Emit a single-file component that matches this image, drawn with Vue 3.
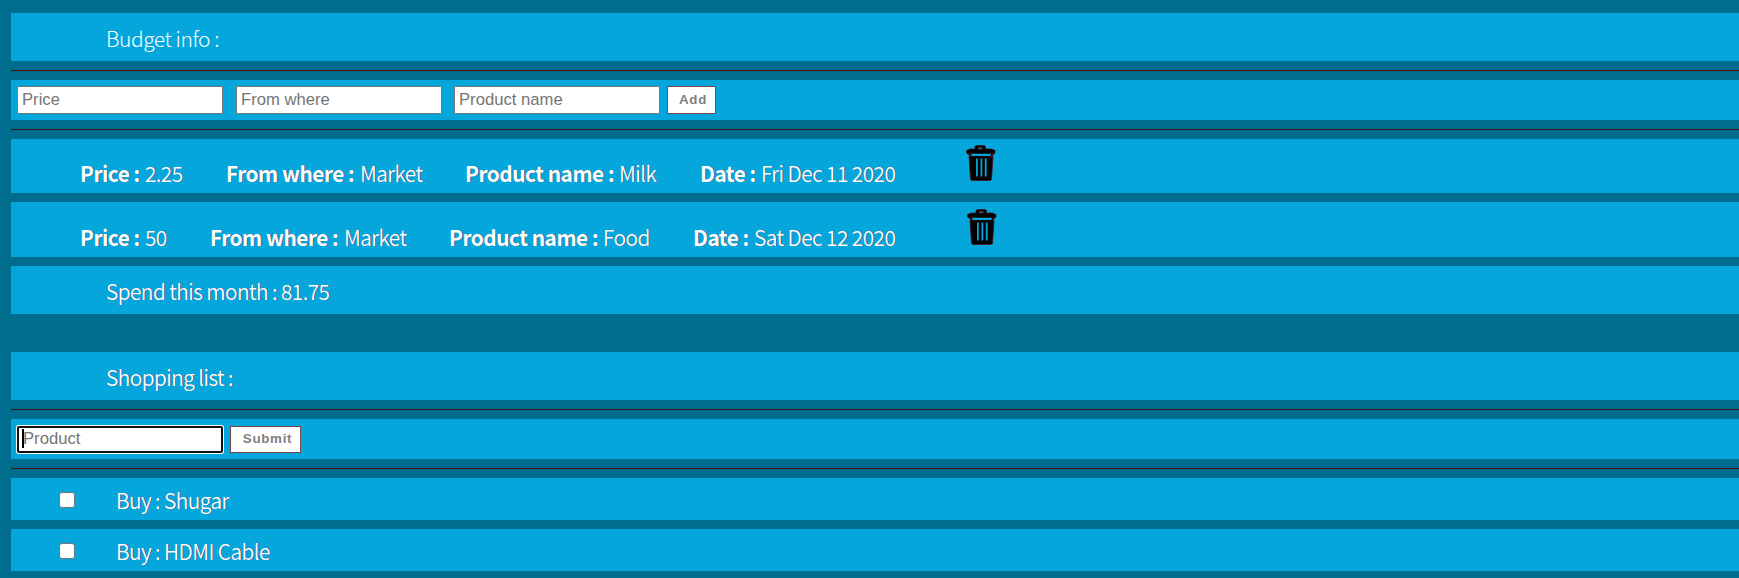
<script setup>
const expenses = [
  { id: 1, price: '2.25', from: 'Market', product: 'Milk', date: 'Fri Dec 11 2020' },
  { id: 2, price: '50', from: 'Market', product: 'Food', date: 'Sat Dec 12 2020' },
]
const shopping = ['Shugar', 'HDMI Cable']
</script>

<template>
  <main class="page">
    <header class="panel title budget">Budget info :</header>
    <hr class="rule" />
    <form class="panel form" @submit.prevent>
      <input class="field" placeholder="Price" />
      <input class="field" placeholder="From where" />
      <input class="field product" placeholder="Product name" />
      <button class="btn add">Add</button>
    </form>
    <hr class="rule dark" />
    <section v-for="e in expenses" :key="e.id" class="panel expense" :class="'row' + e.id">
      <p class="cell"><b class="k-price">Price :</b><span>{{ e.price }}</span></p>
      <p class="cell"><b class="k-from">From where :</b><span>{{ e.from }}</span></p>
      <p class="cell"><b class="k-product">Product name :</b><span>{{ e.product }}</span></p>
      <p class="cell"><b class="k-date">Date :</b><span>{{ e.date }}</span></p>
      <svg class="trash" width="30" height="36" viewBox="0 0 30 36">
        <path fill="#000" stroke="#510b0b" stroke-width=".7" fill-rule="evenodd" d="M10 .5h8l1.500 1V4h6L29 5.500V8l-1.500 1.500h-25L.5 8V5.500L4 4h5V1.500zM12 2.500V4h4.500V2.500z" />
        <path fill="#000" stroke="#510b0b" stroke-width=".7" d="M2 8.500h4l-1 3zM28 8.500h-4l1 3zM3 11h24l-1.500 23.500-1.500 1H6l-1.500-1z" />
        <path fill="#04a6dc" d="M5 8.700h20l-1 2.300H6zM10 13.500h1.800v18H10zM14.500 13.500h1.800v18h-1.800zM18.800 13.500h1.800v18h-1.800z" />
      </svg>
    </section>
    <section class="panel title">Spend this month : 81.75</section>
    <section class="panel title list-title">Shopping list :</section>
    <hr class="rule dark" />
    <form class="panel form" @submit.prevent>
      <div class="field focused"><i class="caret"></i>Product</div>
      <button class="btn submit">Submit</button>
    </form>
    <hr class="rule" />
    <label v-for="s in shopping" :key="s" class="panel item">
      <input type="checkbox" class="check" />
      <span>Buy : {{ s }}</span>
    </label>
  </main>
</template>

<style>
body {
  background: #006d8f;
  overflow: hidden;
}
</style>

<style scoped>
.page {
  box-sizing: border-box;
  height: 578px;
  padding: 13px 0 0 11px;
  background: #006d8f;
  color: #fff;
  font: 350 21px/30px "Noto Sans CJK SC", "Noto Sans", sans-serif;
  letter-spacing: -0.67px;
  text-shadow: 1px 0 rgba(100, 15, 30, 0.5);
  white-space: nowrap;
}
.panel {
  box-sizing: border-box;
  margin-bottom: 9px;
  background: #04a6dc;
  display: flex;
}
.title {
  height: 48px;
  padding: 10px 0 0 95px;
}
.budget {
  font-weight: 300;
  letter-spacing: -0.46px;
  text-shadow: none;
}
.list-title {
  margin-top: 38px;
}
.rule {
  height: 1px;
  margin: 0 0 9px;
  border: 0;
  background: #510b0b;
}
.dark {
  background: #34141b;
}
.form {
  height: 40px;
  padding: 6px;
}
.field {
  box-sizing: border-box;
  width: 206px;
  height: 28px;
  margin: 0 13px 0 0;
  padding: 1px 4px;
  border: 1px solid #767676;
  border-radius: 1px;
  background: #fff;
  color: #757575;
  font: 400 16.670px/24px "Liberation Sans", Arial, sans-serif;
  letter-spacing: 0;
  text-shadow: none;
  outline: none;
}
.product {
  margin-left: -1px;
}
.field::placeholder {
  color: #757575;
  opacity: 1;
}
.btn {
  box-sizing: border-box;
  height: 28px;
  margin-left: -6px;
  padding: 0 0 2px 3px;
  border: 1px solid #764848;
  border-radius: 0;
  background: #fff;
  color: #808080;
  font: 700 13.330px "Liberation Sans", Arial, sans-serif;
  letter-spacing: 0.7px;
}
.add {
  width: 49px;
}
.submit {
  width: 71px;
  height: 27px;
  margin-top: 1px;
  padding-left: 4px;
}
.expense {
  display: grid;
  height: 54px;
  padding-left: 69px;
}
.row1 {
  grid-template-columns: 146px 239px 235px 266px 30px;
}
.row2 {
  grid-template-columns: 130px 239px 244px 274px 30px;
  height: 55px;
}
.cell {
  display: flex;
  margin: 19px 0 0;
}
.row2 .cell {
  margin-top: 20px;
}
.cell b {
  font-weight: 700;
  letter-spacing: -0.58px;
  flex: none;
}
.k-price {
  width: 65px;
}
.k-from {
  width: 134px;
}
.k-product {
  width: 154px;
}
.k-date {
  width: 61px;
}
.trash {
  margin-top: 6px;
}
.row2 .trash {
  margin-top: 7px;
}
.focused {
  width: 204px;
  height: 25px;
  margin: 2px 14px 0 1px;
  padding: 0 3px;
  border: 0;
  border-radius: 1px;
  outline: 2px solid #101010;
  outline-offset: -1px;
  box-shadow: 0 0 0 2px #fff;
  line-height: 23px;
  display: flex;
}
.caret {
  width: 2px;
  height: 19px;
  margin: 2px -1px 0 1px;
  background: #000;
}
.item {
  height: 42px;
  padding: 7px 0 0 48px;
}
.check {
  box-sizing: border-box;
  appearance: none;
  width: 16px;
  height: 16px;
  margin: 7px 41px 0 0;
  border: 1px solid #767676;
  border-radius: 3px;
  background: #fff;
}
</style>
